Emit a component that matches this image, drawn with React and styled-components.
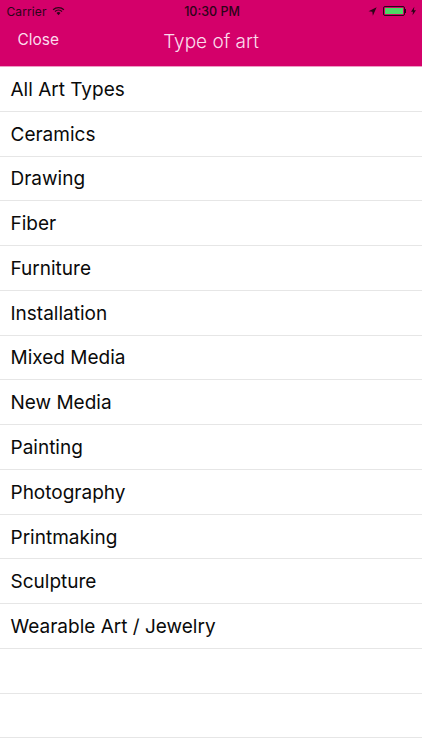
import styled, { createGlobalStyle } from "styled-components"

const categories = [
    "All Art Types",
    "Ceramics",
    "Drawing",
    "Fiber",
    "Furniture",
    "Installation",
    "Mixed Media",
    "New Media",
    "Painting",
    "Photography",
    "Printmaking",
    "Sculpture",
    "Wearable Art / Jewelry",
    "",
    "",
]

const App = () => {
    return (
        <>
            <GlobalStyle />
            <Screen>
                <Header>
                    <StatusBar>
                        <StatusSide>
                            <Carrier>Carrier</Carrier>
                            <svg width="13" height="10" viewBox="0 0 14 10">
                                <path d="M7 9.6 L4.9 7.2 A3 3 0 0 1 9.1 7.2 Z" fill="#2c0418" />
                                <path d="M1.2 3.6 A8.4 8.4 0 0 1 12.8 3.6" fill="none" stroke="#2c0418" strokeWidth="1.4" />
                                <path d="M3.2 5.6 A5.6 5.6 0 0 1 10.8 5.6" fill="none" stroke="#2c0418" strokeWidth="1.4" />
                            </svg>
                        </StatusSide>
                        <Clock>10:30 PM</Clock>
                        <StatusSide $right>
                            <svg width="9" height="9" viewBox="0 0 10 10">
                                <path d="M9.6 0.4 L0.6 4.6 L4.8 5.2 L5.4 9.6 Z" fill="#2c0418" />
                            </svg>
                            <Battery>
                                <BatteryFill />
                            </Battery>
                            <BatteryCap />
                            <svg width="5" height="10" viewBox="0 0 6 10">
                                <path d="M4 0 L0 5.8 L2.4 5.8 L1.8 10 L6 4 L3.4 4 Z" fill="#2c0418" />
                            </svg>
                        </StatusSide>
                    </StatusBar>
                    <NavBar>
                        <CloseButton>Close</CloseButton>
                        <Title>Type of art</Title>
                    </NavBar>
                </Header>
                <List>
                    {categories.map((name, idx) => (
                        <Row key={idx}>{name}</Row>
                    ))}
                </List>
            </Screen>
        </>
    )
}

export default App

const GlobalStyle = createGlobalStyle`
    html, body {
        margin: 0;
        padding: 0;
        background: #fff;
    }
`

const Screen = styled.div`
    width: 422px;
    height: 750px;
    overflow: hidden;
    background: #fff;
    font-family: Inter, "Liberation Sans", sans-serif;
`

const Header = styled.header`
    height: 66px;
    background: #d4006a;
    border-bottom: 1px solid #ee9cc4;
    box-sizing: content-box;
`

const StatusBar = styled.div`
    position: relative;
    height: 22px;
    display: flex;
    align-items: center;
    justify-content: space-between;
    padding: 0 6px 0 6.5px;
    color: #2c0418;
    font-size: 12px;
`

const StatusSide = styled.div`
    display: flex;
    align-items: center;
    gap: ${(props) => (props.$right ? "0" : "5px")};

    > svg:first-child {
        margin-right: ${(props) => (props.$right ? "6px" : "0")};
    }

    > svg:last-child {
        margin-left: ${(props) => (props.$right ? "5px" : "0")};
    }
`

const Carrier = styled.span`
    font-size: 12px;
    letter-spacing: 0.1px;
`

const Clock = styled.span`
    position: absolute;
    left: 2px;
    right: 0;
    text-align: center;
    font-size: 12.5px;
    font-weight: 500;
`

const Battery = styled.div`
    width: 22px;
    height: 10px;
    box-sizing: border-box;
    border: 1px solid #2c0418;
    border-radius: 2px;
    padding: 1px;
`

const BatteryFill = styled.div`
    height: 100%;
    background: #4cd964;
`

const BatteryCap = styled.div`
    width: 1.5px;
    height: 4px;
    background: #2c0418;
`

const NavBar = styled.div`
    position: relative;
    height: 44px;
    display: flex;
    align-items: center;
    justify-content: center;
`

const CloseButton = styled.button`
    position: absolute;
    left: 17.5px;
    top: 8px;
    padding: 0;
    border: 0;
    background: none;
    color: #fbdcec;
    font: 400 15.5px Inter, "Liberation Sans", sans-serif;
`

const Title = styled.h1`
    margin: 0 0 6px;
    color: #fbdcec;
    font-size: 19px;
    font-weight: 300;
`

const List = styled.div`
    display: flex;
    flex-direction: column;
`

const Row = styled.div`
    height: 44.77px;
    box-sizing: border-box;
    flex: none;
    display: flex;
    align-items: center;
    padding: 1px 0 0 10.5px;
    border-bottom: 1px solid #e6e6e6;
    color: #0a0a0a;
    font-size: 19px;
`
